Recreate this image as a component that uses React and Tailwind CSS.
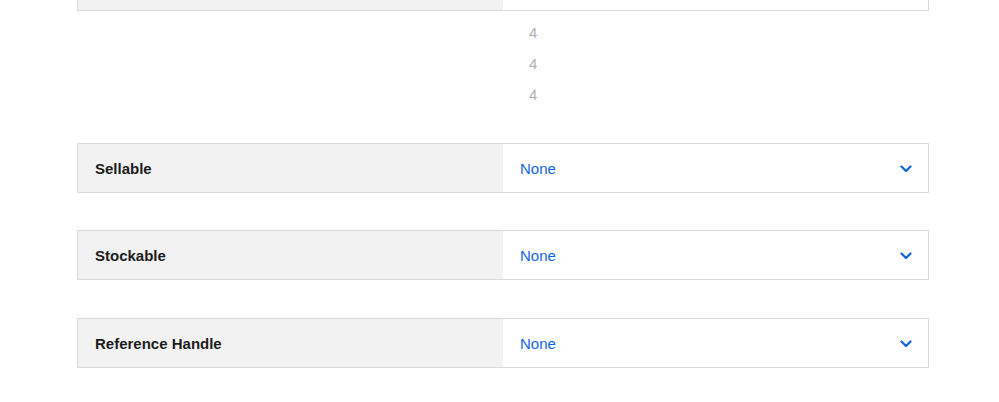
const rows = ["Sellable", "Stockable", "Reference Handle"]

const Chevron = () => (
	<svg width="12" height="8" viewBox="0 0 12 8" fill="none">
		<path d="M1.5 1.5 L6 6 L10.5 1.5" stroke="#1463e0" strokeWidth="2.2" strokeLinecap="round" strokeLinejoin="round" />
	</svg>
)

const Row = ({ label, className = "" }) => (
	<div className={`flex h-[50px] border border-[#d9d9d9] ${className}`}>
		<div className="w-[425px] bg-[#f2f2f2] flex items-center pl-[17px] pt-[2px] text-[15px] font-bold text-[#1c1c1c]">
			{label}
		</div>
		<div className="flex-1 bg-white flex items-center justify-between pl-[17px] pr-[16px] pt-[2px] text-[15px] text-[#1463e0]">
			<span>None</span>
			<Chevron />
		</div>
	</div>
)

export default function App() {
	return (
		<div className="w-[999px] h-[402px] bg-white overflow-hidden" style={{ fontFamily: '"Liberation Sans", Arial, sans-serif' }}>
			<div className="ml-[77px] w-[852px]">
				{/* tail of the row above */}
				<div className="flex h-[11px] border-x border-b border-[#d9d9d9]">
					<div className="w-[425px] bg-[#f2f2f2]" />
					<div className="flex-1 bg-white" />
				</div>

				<div className="pt-[6px] pl-[452px] text-[15px] text-[#b0b0b0]">
					<div className="h-[31px] leading-[31px]">4</div>
					<div className="h-[31px] leading-[31px]">4</div>
					<div className="h-[31px] leading-[31px]">4</div>
				</div>

				<div className="mt-[33px]">
					<Row label={rows[0]} />
					<Row label={rows[1]} className="mt-[37px]" />
					<Row label={rows[2]} className="mt-[38px]" />
				</div>
			</div>
		</div>
	)
}
